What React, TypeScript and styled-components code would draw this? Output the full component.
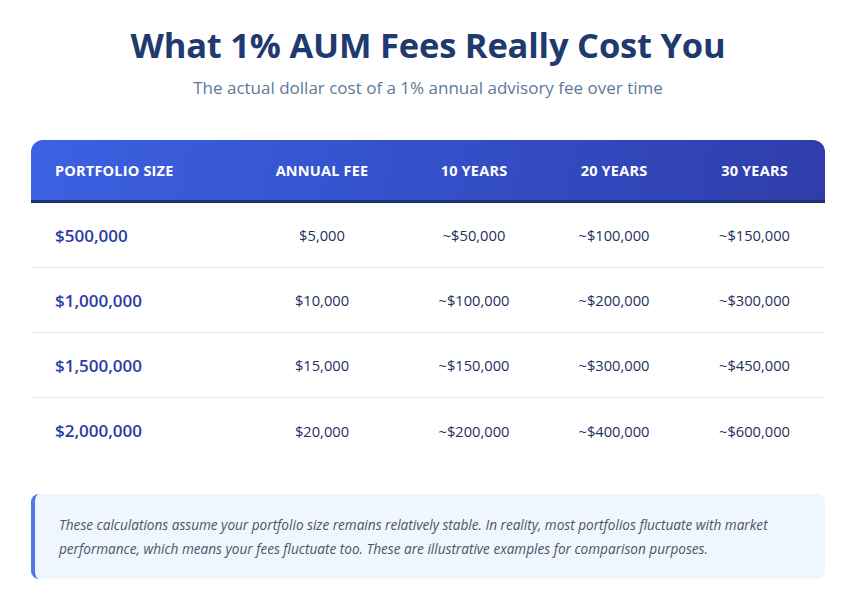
import React from "react";
import styled, { createGlobalStyle } from "styled-components";

const Global = createGlobalStyle`
  html, body { margin: 0; padding: 0; background: #ffffff; }
  body { font-family: "Open Sans", "Noto Sans", sans-serif; }
`;

const Page = styled.div`
  width: 794px;
  margin: 0 auto;
  padding-top: 21px;
`;

const Title = styled.h1`
  margin: 0;
  text-align: center;
  font-size: 34.5px;
  font-weight: 700;
  color: #1e3a6f;
  line-height: 48px;
  letter-spacing: -0.2px;
`;

const Subtitle = styled.p`
  margin: 7px 0 0;
  text-align: center;
  font-size: 17px;
  color: #60789a;
  line-height: 24px;
`;

const Table = styled.div`
  margin-top: 40px;
  display: grid;
  grid-template-columns: 209px 164px 140px 140px 141px;
`;

const HeaderRow = styled.div`
  display: contents;
`;

const HeadCell = styled.div<{ $first?: boolean }>`
  height: 60px;
  display: flex;
  align-items: center;
  justify-content: ${(p) => (p.$first ? "flex-start" : "center")};
  padding-left: ${(p) => (p.$first ? "24px" : "0")};
  color: #ffffff;
  font-size: 14.5px;
  font-weight: 700;
  letter-spacing: 0.2px;
  text-transform: uppercase;
  border-bottom: 3px solid #1f3468;
`;

const HeadBg = styled.div`
  grid-column: 1 / -1;
  grid-row: 1;
  height: 60px;
  border-radius: 12px 12px 0 0;
  background: linear-gradient(100deg, #3c61e2 0%, #3450c9 50%, #2f3dab 100%);
`;

const Cell = styled.div<{ $first?: boolean; $last?: boolean }>`
  height: ${(p) => (p.$last ? "65px" : "64px")};
  display: flex;
  align-items: center;
  justify-content: ${(p) => (p.$first ? "flex-start" : "center")};
  padding-left: ${(p) => (p.$first ? "24px" : "0")};
  border-bottom: ${(p) => (p.$last ? "none" : "1px solid #e6e9ef")};
  font-size: ${(p) => (p.$first ? "17px" : "14.7px")};
  font-weight: ${(p) => (p.$first ? 600 : 400)};
  color: ${(p) => (p.$first ? "#2b3ca6" : "#1e2f5e")};
`;

const Note = styled.div`
  margin-top: 31px;
  background: #f0f6fd;
  border-left: 4px solid #4e7be0;
  border-radius: 8px;
  padding: 19px 24px 18px 24px;
  font-size: 13.6px;
  font-style: italic;
  line-height: 24px;
  color: #4a5568;
`;

const headers = ["Portfolio Size", "Annual Fee", "10 Years", "20 Years", "30 Years"];
const rows = [
  ["$500,000", "$5,000", "~$50,000", "~$100,000", "~$150,000"],
  ["$1,000,000", "$10,000", "~$100,000", "~$200,000", "~$300,000"],
  ["$1,500,000", "$15,000", "~$150,000", "~$300,000", "~$450,000"],
  ["$2,000,000", "$20,000", "~$200,000", "~$400,000", "~$600,000"],
];

export default function App() {
  return (
    <>
      <Global />
      <Page>
        <Title>What 1% AUM Fees Really Cost You</Title>
        <Subtitle>The actual dollar cost of a 1% annual advisory fee over time</Subtitle>
        <Table>
          <HeadBg />
          <HeaderRow>
            {headers.map((h, i) => (
              <HeadCell key={h} $first={i === 0} style={{ gridRow: 1, gridColumn: i + 1 }}>
                {h}
              </HeadCell>
            ))}
          </HeaderRow>
          {rows.map((r, ri) =>
            r.map((c, ci) => (
              <Cell key={`${ri}-${ci}`} $first={ci === 0} $last={ri === rows.length - 1}>
                {c}
              </Cell>
            ))
          )}
        </Table>
        <Note>
          These calculations assume your portfolio size remains relatively stable. In reality, most
          portfolios fluctuate with market performance, which means your fees fluctuate too. These are
          illustrative examples for comparison purposes.
        </Note>
      </Page>
    </>
  );
}
